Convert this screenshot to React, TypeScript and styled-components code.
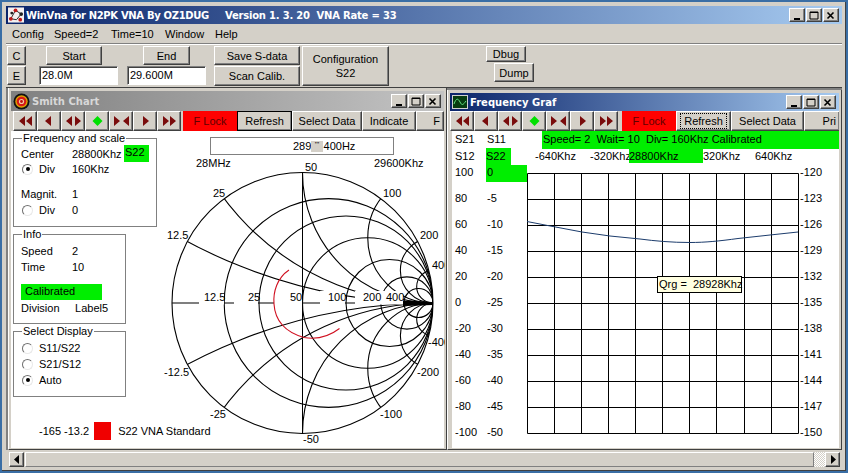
import React from 'react';
import styled, { createGlobalStyle } from 'styled-components';

const GRAY = '#d4d0c8';
const UI_FONT = `'Liberation Sans', Arial, sans-serif`;

const raised = `
  border: 1px solid;
  border-color: #ffffff #404040 #404040 #ffffff;
  box-shadow: inset -1px -1px 0 #808080;
`;

const GlobalStyle = createGlobalStyle`
  html, body { margin: 0; padding: 0; background: #3a6ea5; }
  * { box-sizing: border-box; }
  body { font: 11px ${UI_FONT}; color: #000; overflow: hidden; }
`;

const Desktop = styled.div`
  width: 848px;
  height: 473px;
  padding: 2px 2px 2px;
  background: #3a6ea5;
`;

const MainWindow = styled.div`
  height: 469px;
  padding: 4px;
  background: ${GRAY};
  display: flex;
  flex-direction: column;
  box-shadow: inset -1px -1px 0 #404040;
`;

const TitleBar = styled.div<{ $inactive?: boolean; $h: number }>`
  height: ${p => p.$h}px;
  flex: none;
  display: flex;
  align-items: center;
  padding: 0 3px 0 2px;
  gap: 2px;
  background: ${p =>
    p.$inactive
      ? 'linear-gradient(90deg, #808080, #c4c4c4)'
      : 'linear-gradient(90deg, #0a246a, #a6caf0)'};
`;

const TitleText = styled.span<{ $inactive?: boolean; $spacing?: number; $ml?: number }>`
  font: bold 10px 'DejaVu Sans', Verdana, sans-serif;
  color: ${p => (p.$inactive ? '#d8d8d8' : '#ffffff')};
  white-space: pre;
  margin-left: ${p => p.$ml ?? 0}px;
  letter-spacing: ${p => p.$spacing ?? 0}px;
`;

const CaptionGroup = styled.div`
  margin-left: auto;
  display: flex;
  gap: 1px;
`;

const CaptionBtn = styled.div`
  width: 16px;
  height: 14px;
  background: ${GRAY};
  ${raised}
  display: flex;
  align-items: center;
  justify-content: center;
`;

const MenuBar = styled.div`
  height: 20px;
  flex: none;
  display: flex;
  align-items: center;
  border-bottom: 1px solid #808080;
  box-shadow: 0 1px 0 #ffffff;
  padding-left: 6px;
`;

const MenuItem = styled.span<{ $w: number }>`
  width: ${p => p.$w}px;
`;

const Toolbar = styled.div`
  height: 44px;
  flex: none;
  display: flex;
  padding: 2px 0 0 1px;
  border-bottom: 1px solid #404040;
`;

const ToolColumn = styled.div<{ $w: number; $ml?: number }>`
  width: ${p => p.$w}px;
  margin-left: ${p => p.$ml ?? 0}px;
  flex: none;
  display: flex;
  flex-direction: column;
  gap: 1px;
`;

const PushButton = styled.div<{ $w?: number; $h: number; $ml?: number }>`
  width: ${p => (p.$w ? `${p.$w}px` : '100%')};
  height: ${p => p.$h}px;
  margin-left: ${p => p.$ml ?? 0}px;
  flex: none;
  background: ${GRAY};
  ${raised}
  display: flex;
  align-items: center;
  justify-content: center;
  text-align: center;
  line-height: 14px;
`;

const FreqField = styled.div`
  width: 79px;
  height: 19px;
  background: #fff;
  border: 1px solid;
  border-color: #808080 #fff #fff #808080;
  box-shadow: inset 1px 1px 0 #404040;
  padding: 2px 0 0 2px;
`;

const Mdi = styled.div`
  flex: 1;
  display: flex;
  background: #808080;
  padding-left: 2px;
  min-height: 0;
`;

const ChildWindow = styled.div<{ $w: number; $mt: number }>`
  width: ${p => p.$w}px;
  margin-top: ${p => p.$mt}px;
  flex: none;
  padding: 3px 2px 1px;
  background: ${GRAY};
  display: flex;
  flex-direction: column;
  border-right: 1px solid #404040;
  border-bottom: 1px solid #404040;
  border-left: 1px solid #ffffff;
`;

const NavRow = styled.div<{ $lead: number }>`
  height: 20px;
  flex: none;
  display: flex;
  padding-left: ${p => p.$lead}px;
  overflow: hidden;
`;

const NavBtn = styled.div`
  width: 24px;
  height: 20px;
  flex: none;
  ${raised}
  background: ${GRAY};
  display: flex;
  align-items: center;
  justify-content: center;
`;

const LockBtn = styled.div<{ $ml: number }>`
  width: 54px;
  margin-left: ${p => p.$ml}px;
  flex: none;
  background: #ff0000;
  color: #600000;
  display: flex;
  align-items: center;
  justify-content: center;
`;

const TextBtn = styled.div<{ $w: number; $pressed?: boolean; $end?: boolean }>`
  width: ${p => p.$w}px;
  flex: none;
  background: ${GRAY};
  ${raised}
  ${p => (p.$pressed ? 'outline: 1px solid #000; outline-offset: -1px;' : '')}
  display: flex;
  align-items: center;
  justify-content: ${p => (p.$end ? 'flex-end' : 'center')};
  padding-right: ${p => (p.$end ? '3px' : '0')};
  overflow: hidden;
`;

const FocusLabel = styled.span`
  outline: 1px dotted #000;
  outline-offset: 0;
  padding: 0 3px;
  line-height: 14px;
`;

const ClientArea = styled.div<{ $inset: number }>`
  flex: 1;
  margin-left: ${p => p.$inset}px;
  background: #fff;
  min-height: 0;
`;

const SmithClient = styled(ClientArea)`
  display: flex;
`;

const SidePanel = styled.div`
  width: 150px;
  flex: none;
  padding-left: 2px;
`;

const Group = styled.fieldset<{ $w: number; $h: number }>`
  width: ${p => p.$w}px;
  height: ${p => p.$h}px;
  margin: 0;
  padding: 0 0 0 7px;
  border: 1px solid #808080;
  min-width: 0;
`;

const GroupTitle = styled.legend`
  padding: 0 1px;
  margin-left: 1px;
  line-height: 14px;
`;

const PropRow = styled.div<{ $mt?: number }>`
  height: 16px;
  margin-top: ${p => p.$mt ?? 0}px;
  display: grid;
  grid-template-columns: 51px 52px 25px;
  align-items: center;
  white-space: nowrap;
`;

const GreenTag = styled.div`
  height: 17px;
  background: #00ee00;
  padding-left: 1px;
  line-height: 15px;
`;

const GreenBar = styled.div`
  width: 81px;
  height: 16px;
  margin-top: 9px;
  padding-left: 4px;
  line-height: 14px;
  background: #00ee00;
`;

const RadioLine = styled.div`
  display: flex;
  align-items: center;
  gap: 6px;
  padding-left: 1px;
`;

const RadioMark = styled.span<{ $on?: boolean }>`
  width: 11px;
  height: 11px;
  flex: none;
  border-radius: 50%;
  border: 1px solid;
  border-color: #707070 #e8e8e8 #e8e8e8 #707070;
  display: flex;
  align-items: center;
  justify-content: center;
  &::after {
    content: '';
    width: 4px;
    height: 4px;
    border-radius: 50%;
    background: ${p => (p.$on ? '#000' : 'transparent')};
  }
`;

const TraceLegend = styled.div`
  display: flex;
  align-items: center;
  height: 18px;
  margin-top: 25px;
  padding-left: 26px;
  gap: 7px;
  white-space: nowrap;
`;

const Swatch = styled.span`
  width: 17px;
  height: 18px;
  margin-left: -2px;
  background: #f00000;
  flex: none;
`;

const ChartColumn = styled.div`
  flex: 1;
  min-width: 0;
  padding-top: 6px;
  display: flex;
  flex-direction: column;
`;

const FreqSlider = styled.div`
  position: relative;
  width: 184px;
  height: 18px;
  margin-left: 49px;
  flex: none;
  border: 1px solid #808080;
  padding-left: 82px;
  line-height: 16px;
  background: #fff;
`;

const SliderThumb = styled.span`
  position: absolute;
  left: 100px;
  top: 3px;
  width: 12px;
  height: 11px;
  background: ${GRAY};
  font-size: 8px;
  line-height: 7px;
  text-align: center;
`;

const Drawing = styled.svg`
  display: block;
  flex: none;
  font: 11px ${UI_FONT};
`;

const GrafHeader = styled.div<{ $h: number }>`
  height: ${p => p.$h}px;
  display: flex;
  padding-left: 3px;
  white-space: nowrap;
`;

const HeaderCell = styled.div<{ $w: number; $green?: boolean; $h?: number }>`
  width: ${p => p.$w}px;
  height: ${p => (p.$h ? `${p.$h}px` : 'auto')};
  flex: none;
  line-height: 16px;
  background: ${p => (p.$green ? '#00ee00' : 'transparent')};
`;

const GreenStatus = styled.div`
  flex: 1;
  height: 18px;
  padding-left: 1px;
  line-height: 17px;
  background: #00ee00;
  white-space: pre;
`;

const GrafArea = styled.div`
  position: relative;
  height: 283px;
`;

const Tooltip = styled.div`
  position: absolute;
  left: 205px;
  top: 111px;
  width: 85px;
  height: 17px;
  border: 1px solid #000;
  background: #ffffe1;
  padding-left: 1px;
  line-height: 15px;
  white-space: pre;
`;

const ScrollBar = styled.div`
  height: 15px;
  margin: 2px 0 0 3px;
  width: 831px;
  flex: none;
  display: flex;
`;

const ScrollArrow = styled.div`
  width: 15px;
  flex: none;
  background: ${GRAY};
  ${raised}
  display: flex;
  align-items: center;
  justify-content: center;
`;

const ScrollThumb = styled.div`
  flex: 1;
  margin-left: 1px;
  background: ${GRAY};
  border-top: 1px solid #fff;
  border-left: 1px solid #fff;
  border-right: 1px solid #808080;
  border-bottom: 1px solid #808080;
`;

const ScrollTrack = styled.div`
  width: 11px;
  flex: none;
  background: repeating-conic-gradient(#fff 0 25%, ${GRAY} 0 50%) 0 0 / 2px 2px;
`;

const captionGlyphs: Record<string, React.ReactNode> = {
  min: <rect x="2" y="7" width="6" height="2" fill="#000" />,
  max: <path d="M1 1h8v7H1z M1 1.5h8" fill="none" stroke="#000" />,
  close: <path d="M1.5 1.5l6 6M7.5 1.5l-6 6" stroke="#000" strokeWidth="1.6" />,
};

const Caption = () => (
  <CaptionGroup>
    {['min', 'max', 'close'].map(k => (
      <CaptionBtn key={k}>
        <svg width="10" height="9" viewBox="0 0 10 9">
          {captionGlyphs[k]}
        </svg>
      </CaptionBtn>
    ))}
  </CaptionGroup>
);

const navGlyphs = [
  'M8 1L2 6l6 5zM15 1L9 6l6 5z',
  'M10 1L4 6l6 5z',
  'M7 1L1 6l6 5zM10 1l6 5-6 5z',
  '',
  'M1 1l6 5-6 5zM16 1l-6 5 6 5z',
  'M6 1l6 5-6 5z',
  'M2 1l6 5-6 5zM9 1l6 5-6 5z',
];

const NavIcon = ({ d }: { d: string }) => (
  <svg width="17" height="12" viewBox="0 0 17 12">
    {d ? <path d={d} fill="#7a0c0c" /> : <path d="M8.5 1l5 5-5 5-5-5z" fill="#00e000" />}
  </svg>
);

const NavButtons = () => (
  <>
    {navGlyphs.map((d, i) => (
      <NavBtn key={i}>
        <NavIcon d={d} />
      </NavBtn>
    ))}
  </>
);

const AppIcon = () => (
  <svg width="16" height="16" viewBox="0 0 17 16">
    <rect width="17" height="16" fill="#f4f0f0" />
    <path d="M3 12L8 3l6 4-5 6z" fill="none" stroke="#222" />
    <circle cx="8" cy="3" r="2" fill="#c01818" />
    <circle cx="3" cy="12" r="2" fill="#c01818" />
    <circle cx="14" cy="7" r="2" fill="#222" />
    <circle cx="13" cy="13" r="2" fill="#c01818" />
    <circle cx="4" cy="6" r="1.5" fill="#222" />
  </svg>
);

const SmithIcon = () => (
  <svg width="17" height="17" viewBox="0 0 17 17">
    <circle cx="8.5" cy="8.5" r="8" fill="#111" />
    <circle cx="8.5" cy="8.5" r="6.2" fill="#e0a000" />
    <circle cx="8.5" cy="8.5" r="4.8" fill="#d81818" />
    <circle cx="8.5" cy="8.5" r="2.6" fill="#f0c8a0" />
    <circle cx="8.5" cy="8.5" r="1.4" fill="#c01010" />
  </svg>
);

const GrafIcon = () => (
  <svg width="16" height="14" viewBox="0 0 16 14">
    <rect x="0.5" y="0.5" width="15" height="13" fill="#063c10" stroke="#d0d0d0" />
    <path d="M2 9c2-6 4-6 6-2s3 3 6-1" fill="none" stroke="#60e080" />
  </svg>
);

// Smith chart geometry in page pixels
const CX = 301.5;
const CY = 303;
const R = 130.5;
const resist = [0.25, 0.5, 1, 2, 4, 8];

const smithLabels: [number, number, string][] = [
  [195, 167, '28MHz'], [373, 167, '29600Khz'], [304, 171, '50'], [212, 197, '25'],
  [382, 197, '100'], [166, 239, '12.5'], [419, 239, '200'], [431, 269, '400'],
  [203, 301, '12.5'], [247, 301, '25'], [289, 301, '50'], [327, 301, '100'],
  [362, 301, '200'], [385, 301, '400'],
  [427, 346, '-400'], [416, 376, '-200'], [163, 376, '-12.5'],
  [209, 418, '-25'], [379, 418, '-100'], [302, 443, '-50'],
];

const labelBoxes: [number, number][] = [
  [198, 25], [233, 24], [273, 28], [319, 25], [354, 24], [378, 24],
];

const SmithChart = () => (
  <Drawing width="284" height="292" viewBox="160 155 284 292">
    <defs>
      <clipPath id="unit">
        <circle cx={CX} cy={CY} r={R} />
      </clipPath>
    </defs>
    <g fill="none" stroke="#000" strokeWidth="1.1" clipPath="url(#unit)">
      {resist.map(r => (
        <circle key={r} cx={CX + (R * r) / (1 + r)} cy={CY} r={R / (1 + r)} />
      ))}
      {resist.flatMap(x =>
        [1, -1].map(s => (
          <circle key={x * s} cx={CX + R} cy={CY - (s * R) / x} r={R / x} />
        )),
      )}
      <line x1={CX - R} x2={CX + R} y1={CY} y2={CY} />
    </g>
    <circle cx={CX} cy={CY} r={R} fill="none" stroke="#000" strokeWidth="1.1" />
    {labelBoxes.map(([x, w]) => (
      <rect key={x} x={x} y={291} width={w} height={13.5} fill="#fff" />
    ))}
    <line x1={CX} x2={CX} y1={CY - R} y2={CY + R} stroke="#000" />
    <path d="M402 300.5L431 302v3L402 306z" fill="#000" />
    <path
      d="M288 270C276 278 272 292 273 304C274 320 284 332 303 337.5C318 340 330 335 338.5 328.5"
      fill="none"
      stroke="#d01020"
      strokeWidth="1.1"
    />
    {smithLabels.map(([x, y, t]) => (
      <text key={`${x}-${y}`} x={x} y={y}>
        {t}
      </text>
    ))}
  </Drawing>
);

const gridX = [527.5, 554.5, 581.5, 608.5, 635.5, 662.5, 689.5, 716.5, 744.5, 771.5, 798.5];
const gridY = Array.from({ length: 11 }, (_, i) => 173.5 + i * 26);
const leftScale = [100, 80, 60, 40, 20, 0, -20, -40, -60, -80, -100];
const midScale = [0, -5, -10, -15, -20, -25, -30, -35, -40, -45, -50];
const rightScale = [-120, -123, -126, -129, -132, -135, -138, -141, -144, -147, -150];

const GrafChart = () => (
  <Drawing width="386" height="283" viewBox="452 165 386 283">
    <rect x="486" y="165" width="41" height="17" fill="#00ee00" />
    <g stroke="#000">
      {gridX.map(x => (
        <line key={x} x1={x} x2={x} y1={gridY[0]} y2={gridY[10]} />
      ))}
      {gridY.map(y => (
        <line key={y} x1={gridX[0]} x2={gridX[10]} y1={y} y2={y} />
      ))}
    </g>
    <path
      d="M527 221.5L545 225L582 232L610 236L640 239C655 241 672 242.5 690 242.5C705 242.5 720 241 738 238.5L770 235L798 232"
      fill="none"
      stroke="#1c3c6c"
    />
    {gridY.map((y, i) => (
      <g key={y}>
        <text x={455} y={y + 2.5}>{leftScale[i]}</text>
        <text x={487} y={y + 2.5}>{midScale[i]}</text>
        <text x={800} y={y + 2.5}>{rightScale[i]}</text>
      </g>
    ))}
  </Drawing>
);

export default function App() {
  return (
    <Desktop>
      <GlobalStyle />
      <MainWindow>
        <TitleBar $h={18}>
          <AppIcon />
          <TitleText $spacing={-0.33}>WinVna for N2PK VNA By OZ1DUG</TitleText>
          <TitleText $spacing={-0.2} $ml={14}>Version 1. 3. 20  VNA Rate = 33</TitleText>
          <Caption />
        </TitleBar>
        <MenuBar>
          <MenuItem $w={42}>Config</MenuItem>
          <MenuItem $w={57}>Speed=2</MenuItem>
          <MenuItem $w={54}>Time=10</MenuItem>
          <MenuItem $w={50}>Window</MenuItem>
          <MenuItem $w={30}>Help</MenuItem>
        </MenuBar>
        <Toolbar>
          <ToolColumn $w={19}>
            <PushButton $h={19}>C</PushButton>
            <PushButton $h={19}>E</PushButton>
          </ToolColumn>
          <ToolColumn $w={79} $ml={13}>
            <PushButton $w={56} $h={19} $ml={7}>Start</PushButton>
            <FreqField>28.0M</FreqField>
          </ToolColumn>
          <ToolColumn $w={79} $ml={9}>
            <PushButton $w={47} $h={19} $ml={16}>End</PushButton>
            <FreqField>29.600M</FreqField>
          </ToolColumn>
          <ToolColumn $w={86} $ml={8}>
            <PushButton $h={19}>Save S-data</PushButton>
            <PushButton $h={20}>Scan Calib.</PushButton>
          </ToolColumn>
          <ToolColumn $w={87} $ml={2}>
            <PushButton $h={40}>Configuration<br />S22</PushButton>
          </ToolColumn>
          <ToolColumn $w={48} $ml={97}>
            <PushButton $w={40} $h={16}>Dbug</PushButton>
            <PushButton $w={40} $h={19} $ml={8}>Dump</PushButton>
          </ToolColumn>
        </Toolbar>
        <Mdi>
          <ChildWindow $w={439} $mt={0}>
            <TitleBar $inactive $h={20}>
              <SmithIcon />
              <TitleText $inactive>Smith Chart</TitleText>
              <Caption />
            </TitleBar>
            <NavRow $lead={2}>
              <NavButtons />
              <LockBtn $ml={2}>F Lock</LockBtn>
              <TextBtn $w={55} $pressed>Refresh</TextBtn>
              <TextBtn $w={70}>Select Data</TextBtn>
              <TextBtn $w={54}>Indicate</TextBtn>
              <TextBtn $w={28} $end>F</TextBtn>
            </NavRow>
            <SmithClient $inset={0}>
              <SidePanel>
                <Group $w={144} $h={96}>
                  <GroupTitle>Frequency and scale</GroupTitle>
                  <PropRow>
                    <span>Center</span>
                    <span>28800Khz</span>
                    <GreenTag>S22</GreenTag>
                  </PropRow>
                  <PropRow>
                    <RadioLine><RadioMark $on />Div</RadioLine>
                    <span>160Khz</span>
                  </PropRow>
                  <PropRow $mt={9}>
                    <span>Magnit.</span>
                    <span>1</span>
                  </PropRow>
                  <PropRow>
                    <RadioLine><RadioMark />Div</RadioLine>
                    <span>0</span>
                  </PropRow>
                </Group>
                <Group $w={113} $h={97}>
                  <GroupTitle>Info</GroupTitle>
                  <PropRow $mt={2}>
                    <span>Speed</span>
                    <span>2</span>
                  </PropRow>
                  <PropRow>
                    <span>Time</span>
                    <span>10</span>
                  </PropRow>
                  <GreenBar>Calibrated</GreenBar>
                  <PropRow>
                    <span>Division</span>
                    <span>&nbsp;Label5</span>
                  </PropRow>
                </Group>
                <Group $w={113} $h={73}>
                  <GroupTitle>Select Display</GroupTitle>
                  <PropRow $mt={2}><RadioLine><RadioMark />S11/S22</RadioLine></PropRow>
                  <PropRow><RadioLine><RadioMark />S21/S12</RadioLine></PropRow>
                  <PropRow><RadioLine><RadioMark $on />Auto</RadioLine></PropRow>
                </Group>
                <TraceLegend>
                  <span>-165 -13.2</span>
                  <Swatch />
                  <span>S22 VNA Standard</span>
                </TraceLegend>
              </SidePanel>
              <ChartColumn>
                <FreqSlider>
                  289&nbsp;&nbsp;&nbsp;&nbsp;400Hz
                  <SliderThumb>'''</SliderThumb>
                </FreqSlider>
                <SmithChart />
              </ChartColumn>
            </SmithClient>
          </ChildWindow>
          <ChildWindow $w={395} $mt={2}>
            <TitleBar $h={18}>
              <GrafIcon />
              <TitleText>Frequency Graf</TitleText>
              <Caption />
            </TitleBar>
            <NavRow $lead={0}>
              <NavButtons />
              <LockBtn $ml={4}>F Lock</LockBtn>
              <TextBtn $w={55}><FocusLabel>Refresh</FocusLabel></TextBtn>
              <TextBtn $w={73}>Select Data</TextBtn>
              <TextBtn $w={36} $end>Pri</TextBtn>
            </NavRow>
            <ClientArea $inset={2}>
              <GrafHeader $h={17}>
                <HeaderCell $w={32}>S21</HeaderCell>
                <HeaderCell $w={55}>S11</HeaderCell>
                <GreenStatus>Speed= 2  Wait= 10  Div= 160Khz Calibrated</GreenStatus>
              </GrafHeader>
              <GrafHeader $h={17}>
                <HeaderCell $w={31}>S12</HeaderCell>
                <HeaderCell $w={25} $green $h={17}>S22</HeaderCell>
                <HeaderCell $w={24} />
                <HeaderCell $w={55}>-640Khz</HeaderCell>
                <HeaderCell $w={39}>-320Khz</HeaderCell>
                <HeaderCell $w={74} $green $h={15}>28800Khz</HeaderCell>
                <HeaderCell $w={52}>320Khz</HeaderCell>
                <HeaderCell $w={50}>640Khz</HeaderCell>
              </GrafHeader>
              <GrafArea>
                <GrafChart />
                <Tooltip>Qrg =  28928Khz</Tooltip>
              </GrafArea>
            </ClientArea>
          </ChildWindow>
        </Mdi>
        <ScrollBar>
          <ScrollArrow>
            <svg width="6" height="9" viewBox="0 0 6 9"><path d="M5 0L0 4.5 5 9z" fill="#000" /></svg>
          </ScrollArrow>
          <ScrollThumb />
          <ScrollTrack />
          <ScrollArrow>
            <svg width="6" height="9" viewBox="0 0 6 9"><path d="M1 0l5 4.5L1 9z" fill="#000" /></svg>
          </ScrollArrow>
        </ScrollBar>
      </MainWindow>
    </Desktop>
  );
}
